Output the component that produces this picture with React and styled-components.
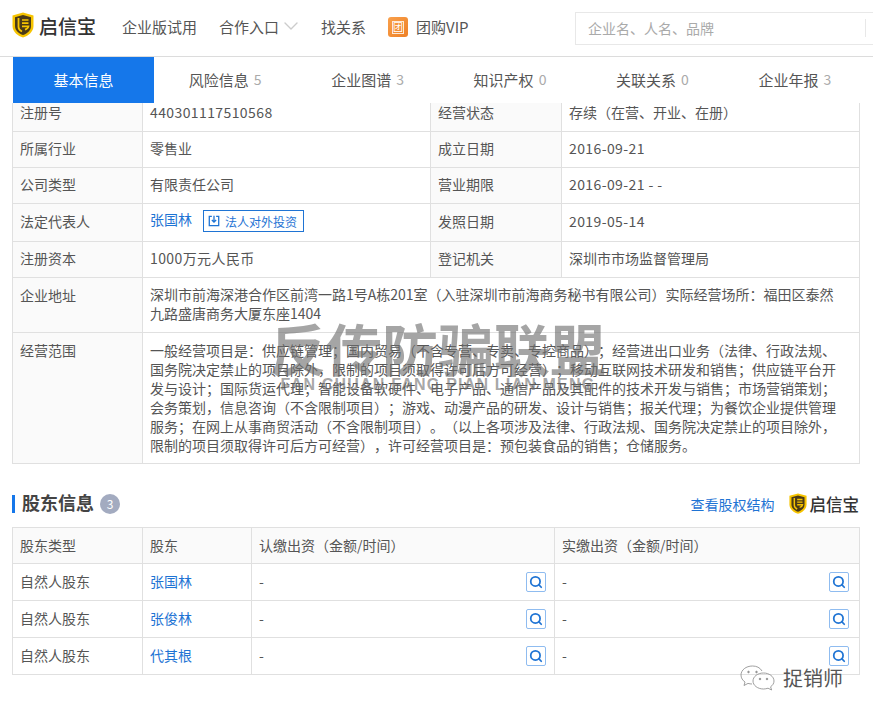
import React from 'react';
import styled, { createGlobalStyle } from 'styled-components';
import { Search, ChevronDown } from 'lucide-react';

const blue = '#1f74d4';
const line = '#e0e0e0';

const GlobalStyle = createGlobalStyle`
  html, body {
    margin: 0;
    background: #fff;
    color: #555;
    font-family: "Noto Sans CJK SC", "Liberation Sans", sans-serif;
    font-size: 14px;
    text-spacing-trim: space-all;
  }
  * { box-sizing: border-box; }
`;

const Page = styled.div`
  position: relative;
  width: 873px;
  height: 717px;
  overflow: hidden;
`;

const Header = styled.header`
  display: flex;
  align-items: center;
  height: 57px;
  padding-left: 12px;
  border-bottom: 1px solid #dcdcdc;
`;

const Brand = styled.div`
  display: flex;
  align-items: center;
  gap: ${p => p.$small ? '3px' : '5px'};
  font-size: ${p => p.$small ? '16.5px' : '19px'};
  font-weight: 500;
  color: #333;
  margin: ${p => p.$small ? '0' : '0 26px 6px 0'};
`;

const Nav = styled.nav`
  display: flex;
  align-items: center;
  gap: 22px;
  margin-bottom: 4px;
  font-size: 15px;
  color: #555;
`;

const NavItem = styled.span`
  display: flex;
  align-items: center;
  gap: ${p => p.$gap || 0}px;
`;

const Chevron = styled(ChevronDown)`
  margin-right: -4px;
  color: #ccc;
`;

const VipIcon = styled.span`
  display: flex;
  align-items: center;
  justify-content: center;
  width: 20px;
  height: 20px;
  margin-top: 2px;
  border-radius: 3px;
  background: linear-gradient(135deg, #f9a04b, #ee8026);
  color: #fff;
  font-size: 10px;
  line-height: 1;
  &::before {
    content: '团';
    display: block;
    padding: 0 0 1px;
    outline: 1px solid rgba(255, 255, 255, 0.8);
  }
`;

const SearchBox = styled.div`
  display: flex;
  align-items: center;
  width: 320px;
  height: 33px;
  margin-left: auto;
  margin-right: -22px;
  padding-left: 12px;
  border: 1px solid #e8e8e8;
  color: #aaa;
  font-size: 14px;
`;

const SearchDivider = styled.i`
  width: 1px;
  height: 18px;
  margin-left: auto;
  margin-right: 28px;
  background: #e8e8e8;
`;

const Tabs = styled.div`
  display: flex;
  width: 853px;
  height: 46px;
  margin-left: 13px;
`;

const Tab = styled.div`
  flex: ${p => p.$active ? '0 0 141px' : '1'};
  display: flex;
  align-items: center;
  justify-content: center;
  gap: 5px;
  padding-bottom: 2px;
  font-size: 15px;
  color: ${p => p.$active ? '#fff' : '#555'};
  background: ${p => p.$active ? '#1577ea' : 'transparent'};
`;

const TabCount = styled.span`
  color: #aaa;
  font-size: 14px;
`;

const Table = styled.table`
  width: 847px;
  margin-left: 12px;
  border-collapse: collapse;
  table-layout: fixed;
  font-size: 14px;
  line-height: 19px;
`;

const Row = styled.tr`
  height: ${p => p.$h}px;
`;

const Label = styled.td`
  padding: ${p => p.$top ? '8px 7px 0' : '0 7px 2px'};
  vertical-align: ${p => p.$top ? 'top' : 'middle'};
  border: 1px solid ${line};
  background: #fafafa;
  color: #555;
`;

const Cell = styled.td`
  padding: ${p => p.$pad || '0 7px 2px'};
  vertical-align: middle;
  border: 1px solid ${line};
  color: #555;
  letter-spacing: ${p => p.$num ? '0.4px' : '0'};
`;

const ClippedLabel = styled(Label)`
  padding-bottom: 8px;
  border-top: none;
`;

const ClippedCell = styled(Cell)`
  padding-bottom: 8px;
  border-top: none;
`;

const PersonLink = styled.span`
  color: ${blue};
`;

const InvestButton = styled.span`
  display: inline-flex;
  align-items: center;
  gap: 5px;
  height: 22px;
  margin-left: 11px;
  padding: 0 6px 0 4px;
  border: 1px solid ${blue};
  color: ${blue};
  font-size: 12px;
  vertical-align: middle;
`;

const SectionHead = styled.div`
  display: flex;
  align-items: center;
  width: 847px;
  height: 20px;
  margin: 30px 0 0 12px;
`;

const SectionTitle = styled.h2`
  height: 18px;
  margin: 0;
  padding-left: 7px;
  border-left: 3px solid #1577ea;
  font-size: 18px;
  line-height: 15px;
  font-weight: 700;
  color: #444;
`;

const Badge = styled.span`
  display: flex;
  align-items: center;
  justify-content: center;
  width: 20px;
  height: 20px;
  margin-left: 6px;
  border-radius: 50%;
  background: #a3abc0;
  color: #fff;
  font-size: 12px;
`;

const SectionRight = styled.div`
  display: flex;
  align-items: center;
  gap: 14px;
  margin-left: auto;
  color: ${blue};
  font-size: 14px;
`;

const HolderTable = styled(Table)`
  margin-top: 13px;

  td {
    padding-bottom: 0;
  }
`;

const InvestRow = styled.div`
  display: flex;
  align-items: center;
  justify-content: space-between;
`;

const LookButton = styled.span`
  display: flex;
  align-items: center;
  justify-content: center;
  width: 20px;
  height: 20px;
  border: 1px solid #8fbcf0;
  border-radius: 2px;
  color: #1f74d4;
`;

const Watermark = styled.div`
  position: absolute;
  left: 268px;
  top: 317px;
  width: 340px;
  text-align: center;
  color: rgba(110, 110, 110, 0.62);
  pointer-events: none;
`;

const WatermarkTitle = styled.div`
  font-size: 56px;
  line-height: 60px;
  font-weight: 700;
  white-space: nowrap;
`;

const WatermarkSub = styled.div`
  font-family: "Liberation Sans", sans-serif;
  font-size: 16px;
  font-weight: 700;
  line-height: 16px;
  letter-spacing: 1.2px;
  white-space: nowrap;
`;

const Signature = styled.div`
  position: absolute;
  left: 740px;
  top: 663px;
  display: flex;
  align-items: center;
  gap: 7px;
  color: #555;
  font-size: 20px;
  text-shadow: 0 0 2px #fff;
`;

function Shield({ size }) {
  return (
    <svg width={size} height={size * 1.18} viewBox="0 0 22 26">
      <path d="M11 0.5 L21.5 3.5 V14 C21.5 20 16 24 11 25.5 C6 24 0.5 20 0.5 14 V3.5 Z" fill="#f6c400" />
      <path d="M11 3 L19 5.2 V14 C19 18.6 15 21.6 11 23 C7 21.6 3 18.6 3 14 V5.2 Z" fill="#4a3a17" />
      <path d="M6.5 6 V15 C6.5 17 8 18.6 10 19.6" fill="none" stroke="#f6c400" strokeWidth="1.8" />
      <path d="M10 8 H16.5 M10 11.2 H16.5 M10 14.4 H16.5 C16.2 16 15 17 13 17.6" fill="none" stroke="#f6c400" strokeWidth="1.7" />
    </svg>
  );
}

function ExportIcon() {
  return (
    <svg width="12" height="12" viewBox="0 0 14 14" fill="none" stroke={blue} strokeWidth="1.5">
      <path d="M4.5 1.5 H1.5 V12.5 H12.5 V1.5 H9.5" />
      <path d="M7 1 V8 M4.5 5.8 L7 8.3 L9.5 5.8" />
    </svg>
  );
}

function WeChatIcon() {
  return (
    <svg width="36" height="26" viewBox="0 0 36 26" fill="none" stroke="#888" strokeWidth="0.8">
      <path d="M22 6 C20 2.5 16.5 1 12.5 1 C6 1 1 5 1 10 C1 13 2.6 15.4 5 17 L4 20.5 L8 18.4 C9.4 18.8 10.8 19 12 19" />
      <circle cx="8.5" cy="7" r="0.8" fill="#888" />
      <circle cx="16.5" cy="7" r="0.8" fill="#888" />
      <path d="M23.5 8 C29 8 34 11.4 34 16 C34 18.4 32.6 20.4 30.6 21.8 L31.6 25 L28 23.2 C26.6 23.7 25 24 23.5 24 C17.6 24 13 20.4 13 16 C13 11.6 17.6 8 23.5 8 Z" />
      <circle cx="20" cy="14" r="0.8" fill="#888" />
      <circle cx="27" cy="14" r="0.8" fill="#888" />
    </svg>
  );
}

const tabs = [
  ['基本信息'],
  ['风险信息', 5],
  ['企业图谱', 3],
  ['知识产权', 0],
  ['关联关系', 0],
  ['企业年报', 3],
];

const holders = ['张国林', '张俊林', '代其根'];

export default function App() {
  return (
    <Page>
      <GlobalStyle />
      <Header>
        <Brand>
          <Shield size={22} />
          启信宝
        </Brand>
        <Nav>
          <NavItem>企业版试用</NavItem>
          <NavItem>
            合作入口
            <Chevron size={24} strokeWidth={1.4} />
          </NavItem>
          <NavItem>找关系</NavItem>
          <NavItem $gap={8}>
            <VipIcon />
            团购VIP
          </NavItem>
        </Nav>
        <SearchBox>
          企业名、人名、品牌
          <SearchDivider />
        </SearchBox>
      </Header>

      <Tabs>
        {tabs.map(([name, count], i) => (
          <Tab key={name} $active={i === 0}>
            {name}
            {count !== undefined && <TabCount>{count}</TabCount>}
          </Tab>
        ))}
      </Tabs>

      <Table>
        <colgroup>
          <col width="130" />
          <col width="288" />
          <col width="131" />
          <col width="298" />
        </colgroup>
        <tbody>
          <Row $h={28}>
            <ClippedLabel>注册号</ClippedLabel>
            <ClippedCell $num>440301117510568</ClippedCell>
            <ClippedLabel>经营状态</ClippedLabel>
            <ClippedCell>存续（在营、开业、在册）</ClippedCell>
          </Row>
          <Row $h={36}>
            <Label>所属行业</Label>
            <Cell>零售业</Cell>
            <Label>成立日期</Label>
            <Cell $num>2016-09-21</Cell>
          </Row>
          <Row $h={36}>
            <Label>公司类型</Label>
            <Cell>有限责任公司</Cell>
            <Label>营业期限</Label>
            <Cell $num>2016-09-21 - -</Cell>
          </Row>
          <Row $h={38}>
            <Label>法定代表人</Label>
            <Cell>
              <PersonLink>张国林</PersonLink>
              <InvestButton>
                <ExportIcon />
                法人对外投资
              </InvestButton>
            </Cell>
            <Label>发照日期</Label>
            <Cell $num>2019-05-14</Cell>
          </Row>
          <Row $h={36}>
            <Label>注册资本</Label>
            <Cell $num>1000万元人民币</Cell>
            <Label>登记机关</Label>
            <Cell>深圳市市场监督管理局</Cell>
          </Row>
          <Row $h={55}>
            <Label $top>企业地址</Label>
            <Cell colSpan={3} $pad="0 14px 2px 7px">
              深圳市前海深港合作区前湾一路1号A栋201室（入驻深圳市前海商务秘书有限公司）实际经营场所：福田区泰然九路盛唐商务大厦东座1404
            </Cell>
          </Row>
          <Row $h={131}>
            <Label $top>经营范围</Label>
            <Cell colSpan={3} $pad="0 14px 0 7px">
              一般经营项目是：供应链管理；国内贸易（不含专营、专卖、专控商品）；经营进出口业务（法律、行政法规、国务院决定禁止的项目除外，限制的项目须取得许可后方可经营）；移动互联网技术研发和销售；供应链平台开发与设计；国际货运代理；智能设备软硬件、电子产品、通信产品及其配件的技术开发与销售；市场营销策划；会务策划，信息咨询（不含限制项目）；游戏、动漫产品的研发、设计与销售；报关代理；为餐饮企业提供管理服务；在网上从事商贸活动（不含限制项目）。（以上各项涉及法律、行政法规、国务院决定禁止的项目除外，限制的项目须取得许可后方可经营），许可经营项目是：预包装食品的销售；仓储服务。
            </Cell>
          </Row>
        </tbody>
      </Table>

      <SectionHead>
        <SectionTitle>股东信息</SectionTitle>
        <Badge>3</Badge>
        <SectionRight>
          查看股权结构
          <Brand $small>
            <Shield size={18} />
            启信宝
          </Brand>
        </SectionRight>
      </SectionHead>

      <HolderTable>
        <colgroup>
          <col width="130" />
          <col width="109" />
          <col width="303" />
          <col width="305" />
        </colgroup>
        <tbody>
          <Row $h={36}>
            <Label>股东类型</Label>
            <Label>股东</Label>
            <Label>认缴出资（金额/时间）</Label>
            <Label>实缴出资（金额/时间）</Label>
          </Row>
          {holders.map(name => (
            <Row $h={37} key={name}>
              <Cell>自然人股东</Cell>
              <Cell><PersonLink>{name}</PersonLink></Cell>
              <Cell $pad="0 8px 0 7px">
                <InvestRow>-<LookButton><Search size={14} strokeWidth={3} /></LookButton></InvestRow>
              </Cell>
              <Cell $pad="0 10px 0 7px">
                <InvestRow>-<LookButton><Search size={14} strokeWidth={3} /></LookButton></InvestRow>
              </Cell>
            </Row>
          ))}
        </tbody>
      </HolderTable>

      <Watermark>
        <WatermarkTitle>反传防骗联盟</WatermarkTitle>
        <WatermarkSub>FAN CHUAN FANG PIAN LIAN MENG</WatermarkSub>
      </Watermark>

      <Signature>
        <WeChatIcon />
        捉销师
      </Signature>
    </Page>
  );
}
